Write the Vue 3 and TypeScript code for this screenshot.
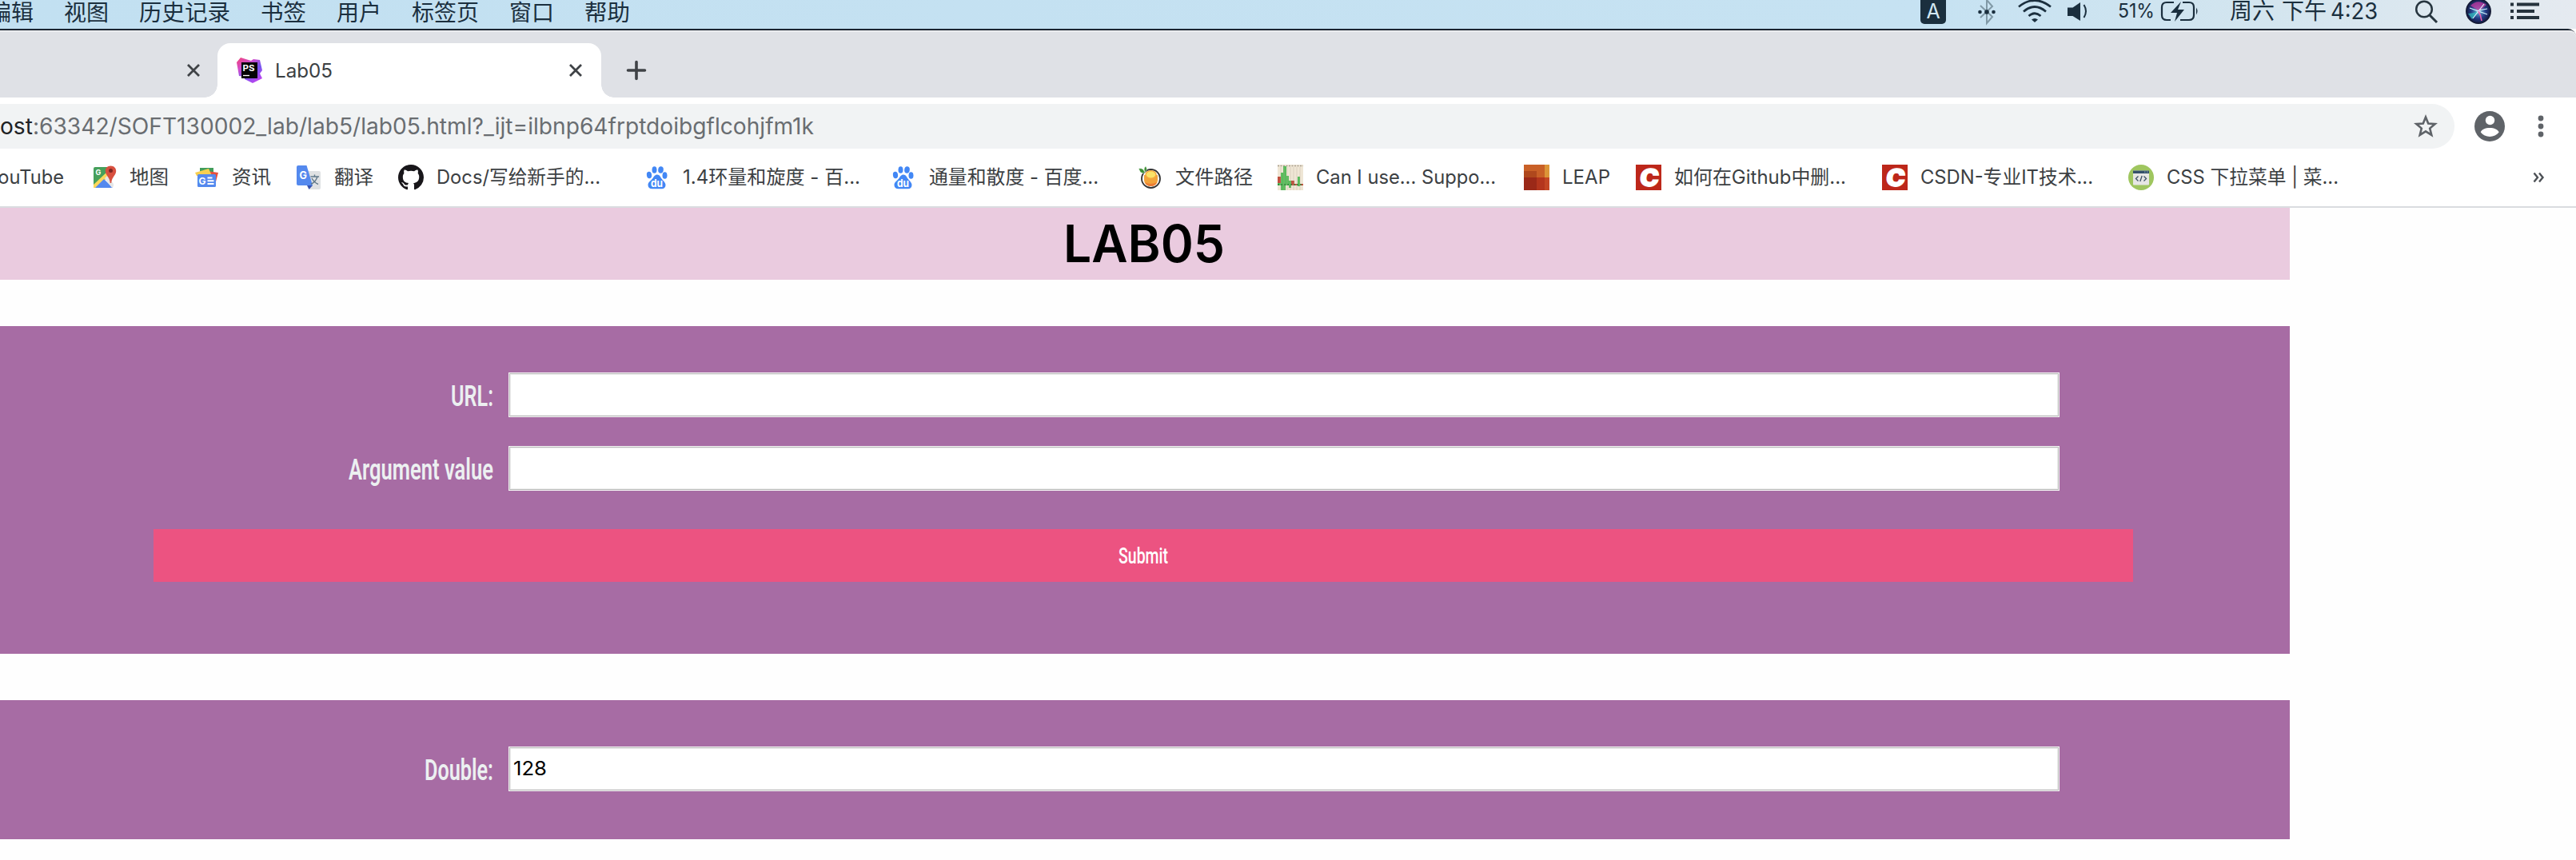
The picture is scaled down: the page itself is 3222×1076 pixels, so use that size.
<script setup lang="ts">
import type { Directive } from 'vue'

interface Bookmark { icon: string; label: string; gap: number; width: number }
interface MenuEntry { label: string; width: number }

// Condenses or expands a label horizontally so it occupies the given width.
const vFit: Directive<HTMLElement, number> = {
  mounted(el, binding) {
    const natural = el.offsetWidth
    const range = document.createRange()
    range.selectNodeContents(el)
    const exact = range.getBoundingClientRect().width || natural
    el.style.transform = `scaleX(${binding.value / exact})`
    el.style.marginRight = `${binding.value - exact}px`
  },
}

const menu: MenuEntry[] = [
  { label: '编辑', width: 56 },
  { label: '视图', width: 56 },
  { label: '历史记录', width: 114 },
  { label: '书签', width: 57 },
  { label: '用户', width: 56 },
  { label: '标签页', width: 84 },
  { label: '窗口', width: 56 },
  { label: '帮助', width: 57 },
]

const bookmarks: Bookmark[] = [
  { icon: 'maps', label: '地图', gap: 34, width: 49 },
  { icon: 'news', label: '资讯', gap: 31, width: 49 },
  { icon: 'translate', label: '翻译', gap: 31, width: 49 },
  { icon: 'github', label: 'Docs/写给新手的...', gap: 31, width: 205 },
  { icon: 'baidu', label: '1.4环量和旋度 - 百...', gap: 55, width: 222 },
  { icon: 'baidu', label: '通量和散度 - 百度...', gap: 38, width: 212 },
  { icon: 'juice', label: '文件路径', gap: 48, width: 97 },
  { icon: 'caniuse', label: 'Can I use... Suppo...', gap: 31, width: 225 },
  { icon: 'leap', label: 'LEAP', gap: 35, width: 60 },
  { icon: 'csdn', label: '如何在Github中删...', gap: 32, width: 215 },
  { icon: 'csdn', label: 'CSDN-专业IT技术...', gap: 45, width: 216 },
  { icon: 'runoob', label: 'CSS 下拉菜单 | 菜...', gap: 44, width: 215 },
]

const icons: Record<string, string> = {
  maps: `<rect x="3" y="3" width="24" height="26" rx="2" fill="#fff"/><path d="M5 3h17v10L3 28V5q0-2 2-2z" fill="#46a05b"/><path d="M3 25 20 9l4 5L6 29H3z" fill="#fbd75b"/><path d="M5 29 16 18 27 29z" fill="#5489ee"/><path d="M17 17l3-3 8 10v3l-2 2z" fill="#e6e6e6"/><path d="M24.500 1.500c-4 0-6.700 2.900-6.700 6.500 0 5.300 5.300 7 6 15h1.400c.7-8 6-9.700 6-15 0-3.600-2.700-6.500-6.700-6.500z" fill="#d8503f"/><circle cx="24.500" cy="7.500" r="2.500" fill="#7d2622"/><text x="5.500" y="13" font-size="9" font-weight="700" fill="#fff">G</text>`,
  news: `<path d="M8 4h17v10H8z" fill="#419d5a"/><path d="M17 8l14 2-4 15H13z" fill="#e5503e"/><path d="M2 10l17-5 4 9H4z" fill="#f7cf50"/><rect x="5" y="12" width="23" height="16" rx="1.500" fill="#5489ee"/><text x="6.500" y="24.500" font-size="12" font-weight="700" fill="#fff">G</text><path d="M17.500 16.500h6M17.500 20.200h8M17.500 24h8" stroke="#fff" stroke-width="1.900"/>`,
  translate: `<path d="M13 8h16q2 0 2 2v19q0 2-2 2H17z" fill="#dfe1e3"/><path d="M14 26h7l-4.500 5z" fill="#3652b0"/><path d="M3 1h10.500L21 26H3q-2 0-2-2V3q0-2 2-2z" fill="#5489ee"/><text x="4.500" y="17.500" font-size="12.500" font-weight="700" fill="#fff">G</text><path d="M18.500 15h10.500M23.500 12.500v2.500M27 15q-2 6.500-8 9.500M20 17q3 5.500 8 7.500" fill="none" stroke="#60788a" stroke-width="1.400"/>`,
  github: `<path transform="scale(2)" fill="#18161a" fill-rule="evenodd" d="M8 0C3.580 0 0 3.580 0 8c0 3.540 2.290 6.530 5.470 7.590.4.070.55-.17.55-.38 0-.19-.01-.82-.01-1.490-2.010.37-2.530-.49-2.690-.94-.09-.23-.48-.94-.82-1.130-.28-.15-.68-.52-.01-.53.63-.01 1.080.58 1.230.82.72 1.210 1.870.87 2.330.66.070-.52.28-.87.510-1.070-1.780-.2-3.640-.89-3.640-3.950 0-.87.31-1.590.82-2.150-.08-.2-.36-1.020.08-2.120 0 0 .67-.21 2.200.82.64-.18 1.320-.27 2-.27s1.360.09 2 .27c1.530-1.040 2.200-.82 2.200-.82.44 1.100.16 1.920.08 2.120.51.56.82 1.270.82 2.150 0 3.070-1.870 3.750-3.650 3.950.29.25.54.73.54 1.480 0 1.070-.01 1.930-.01 2.200 0 .21.15.46.55.38A8.010 8.010 0 0 0 16 8c0-4.420-3.580-8-8-8z"/>`,
  baidu: `<g fill="#4287f5"><ellipse cx="12.500" cy="6.500" rx="3" ry="4.300"/><ellipse cx="20.500" cy="6.500" rx="3.300" ry="4.200" transform="rotate(8 20.500 6.500)"/><ellipse cx="6" cy="13" rx="3.100" ry="4.200" transform="rotate(-8 6 13)"/><ellipse cx="25.500" cy="13.500" rx="3" ry="4.300"/><path d="M16 12.500c3 0 4.200 3 5.500 5 1.800 2.700 5 4.500 5 8 0 3-2 4.700-4.700 4.700H9.700C6.500 30.200 4.500 28.500 4.500 25.500c0-4 4-5.500 6-8.500 1.300-2 2.500-4.500 5.500-4.500z"/></g><text x="8" y="27.500" font-size="13" font-weight="700" fill="#fff" textLength="15" lengthAdjust="spacingAndGlyphs">du</text>`,
  juice: `<circle cx="17.500" cy="17.500" r="11.500" fill="#fff" stroke="#333" stroke-width="1.800"/><path d="M9 13h17v7q-1 7-8.500 7T9 20z" fill="#f2a43b"/><path d="M10 22q7 4 15 0-2 5-7.500 5T10 22z" fill="#ec7d35"/><ellipse cx="17.500" cy="12.500" rx="6.500" ry="4.700" fill="#fbe267" stroke="#f4a93d" stroke-width="1.500"/><path d="M10 11C3 11 4 7 2 5c5-1 7 1 8 6zM10 9c-2-4 0-6 1-7 2 3 2 5-1 7z" fill="#3c8f35" stroke="#fff" stroke-width=".5"/>`,
  caniuse: `<rect width="32" height="32" fill="#efe6d5"/><path d="M0 1.500h32" stroke="#aaa193" stroke-width="1.500" stroke-dasharray="2 1.500"/><path d="M0 15h4v9H0zM16 20h5v6h-5zM20 24h12v2H20z" fill="#c0513f"/><path d="M4 10h3V2h4v12h3v6h3v9h-3v-3h-4v6H4v-6H0v-3h4zM25 15h3v12h-3z" fill="#58bd5c"/><path d="M0 25h32" stroke="#287f35" stroke-width="1.500" stroke-dasharray="2 2"/><path d="M4 3v29M8 3v29M12 3v29M16 3v29M20 3v29M24 3v29M28 3v29" stroke="#b9a998" stroke-opacity=".35"/>`,
  leap: `<rect width="32" height="32" fill="#c96027"/><path d="M26 0h6v16h-6z" fill="#dc9538"/><path d="M0 8h16v8H0z" fill="#af481d"/><path d="M0 16h16v16H0z" fill="#9b2918"/><path d="M16 16h10v16H16z" fill="#b4351d"/><path d="M26 16h6v16h-6z" fill="#c34624"/>`,
  csdn: `<rect width="32" height="32" fill="#bd271a"/><text x="3.500" y="27" font-size="30" font-weight="900" fill="#fff" stroke="#fff" stroke-width="1.200" textLength="24" lengthAdjust="spacingAndGlyphs" transform="translate(3 0) skewX(-5)">C</text>`,
  runoob: `<circle cx="16" cy="16" r="16" fill="#9fc65f"/><rect x="6" y="7.500" width="20" height="18" rx="1" fill="#e6e6e4"/><path d="M6 7.500h20V11H6z" fill="#34506a"/><path d="M20 9.200h1.500M23 9.200h1.500" stroke="#7d9ab0" stroke-width="1.300"/><path d="M12.500 14.500 9.500 17.500l3 3M19.500 14.500l3 3-3 3M17.200 14l-2.400 7" fill="none" stroke="#3c5066" stroke-width="1.300"/>`,
  storm: `<defs><linearGradient id="ps" x1="0" y1="0" x2=".7" y2="1"><stop offset="0" stop-color="#f04475"/><stop offset=".35" stop-color="#d44bcb"/><stop offset=".65" stop-color="#7357f0"/><stop offset="1" stop-color="#bb45ef"/></linearGradient></defs><path d="M5 0 18 4l3-2 8 1 3 13-3 4 3 6-12 6-10-5v-3l-7-1L0 6z" fill="url(#ps)"/><rect x="6" y="6" width="20" height="20" fill="#050505"/><text x="7.500" y="16.500" font-size="10.500" font-weight="700" fill="#fff" textLength="15" lengthAdjust="spacingAndGlyphs">PS</text><path d="M8 22.500h8" stroke="#fff" stroke-width="1.300"/>`,
}
</script>

<template>
  <div class="screen">
    <div class="menubar">
      <nav class="menu">
        <span v-for="m in menu" :key="m.label" v-fit="m.width" class="menu-item">{{ m.label }}</span>
      </nav>
      <div class="status">
        <svg class="input-source" width="32" height="32" viewBox="0 0 32 32"><rect y="-4" width="32" height="34" rx="5" fill="#1b2f3e" /><text x="16" y="23" text-anchor="middle" font-size="25" fill="#d3e7f2">A</text></svg>
        <svg class="bluetooth" width="22" height="32" viewBox="0 0 22 32"><path d="M3 7l15 14-7 8V0l7 8L3 22" fill="none" stroke="#8199a6" stroke-width="2" /><g fill="#1b2f3e"><circle cx="2.500" cy="15" r="2.300" /><circle cx="11" cy="15" r="2.800" /><circle cx="19.500" cy="15" r="2.300" /></g></svg>
        <svg class="wifi" width="42" height="30" viewBox="0 0 42 30"><g fill="none" stroke="#1b2f3e" stroke-width="2.700"><path d="M1 8.500Q21-7.500 41 8.500" /><path d="M7 14.500Q21 2.500 35 14.500" /><path d="M13.500 20Q21 13.500 28.500 20" /></g><path d="M17 24.500q4-3 8 0L21 28z" fill="#1b2f3e" /></svg>
        <svg class="volume" width="26" height="28" viewBox="0 0 26 28"><path d="M0 9.500h6.500L16 3v23L6.500 20H0z" fill="#1b2f3e" /><path d="M20.500 6q5 8 0 16" fill="none" stroke="#1b2f3e" stroke-width="2" /></svg>
        <span v-fit="46" class="percent">51%</span>
        <svg class="battery" width="47" height="28" viewBox="0 0 47 28"><path d="M16 3H7Q1 3 1 9v10q0 6 6 6h5M27 3h8q6 0 6 6v10q0 6-6 6H24" fill="none" stroke="#1b2f3e" stroke-width="2.200" /><path d="M44 9.500q3 4.500 0 9z" fill="#1b2f3e" /><path d="M25 2 12 16h8l-3 11 12-15h-8z" fill="#1b2f3e" /></svg>
        <span class="clock"><span v-fit="56">周六</span><span v-fit="56">下午</span><span v-fit="59">4:23</span></span>
        <svg class="search" width="30" height="30" viewBox="0 0 30 30"><circle cx="12" cy="11.500" r="9.800" fill="none" stroke="#27353f" stroke-width="2.500" /><path d="M18.500 18.500 28 28" stroke="#27353f" stroke-width="3" /></svg>
        <svg class="siri" width="32" height="32" viewBox="0 0 32 32"><defs><radialGradient id="sg" cx=".5" cy=".5" r=".5"><stop offset="0" stop-color="#d8f8ff" /><stop offset=".25" stop-color="#4c88b8" /><stop offset=".6" stop-color="#253b85" /><stop offset="1" stop-color="#131a40" /></radialGradient></defs><circle cx="16" cy="14" r="15.200" fill="url(#sg)" stroke="#141a34" stroke-width="1.500" /><path d="M6 7Q15-2 26 6L17 14z" fill="#c5389f" fill-opacity=".75" /><path d="M3 17q7 0 13-3l-8 10z" fill="#35c8c5" fill-opacity=".7" /><path d="M5 10 27 18M23 5 9 23M16 13 27 11" stroke="#d9f8ff" stroke-width="1.200" /><path d="M16 14q3 5 4 12" stroke="#ef61b0" stroke-width="1.600" fill="none" /></svg>
        <svg class="list" width="36" height="26" viewBox="0 0 36 26"><path d="M0 4h4M8 4h28M0 12.500h4M8 12.500h22M0 20.500h4M8 20.500h28" transform="translate(0 1.500)" stroke="#26333d" stroke-width="3.800" /></svg>
      </div>
    </div>

    <div class="browser">
      <div class="tabstrip">
        <svg class="close" width="16" height="16" viewBox="0 0 16 16"><path d="M1 1l14 14M15 1 1 15" stroke="#3f4246" stroke-width="2.800" /></svg>
        <div class="tab">
          <svg class="favicon" width="32" height="32" viewBox="0 0 32 32" v-html="icons.storm" />
          <span v-fit="72" class="tab-title">Lab05</span>
          <svg class="tab-close" width="16" height="16" viewBox="0 0 16 16"><path d="M1 1l14 14M15 1 1 15" stroke="#3f4246" stroke-width="2.800" /></svg>
        </div>
        <svg class="plus" width="24" height="24" viewBox="0 0 24 24"><path d="M12 1.500v21M1.500 12h21" stroke="#3f4246" stroke-width="3.600" stroke-linecap="round" /></svg>
      </div>

      <div class="toolbar">
        <div class="omnibox">
          <span v-fit="1018" class="url"><b>ost</b>:63342/SOFT130002_lab/lab5/lab05.html?_ijt=ilbnp64frptdoibgflcohjfm1k</span>
          <svg class="star" width="30" height="30" viewBox="0 0 30 30"><path d="M15 3.500l3.200 8 8.500.6-6.500 5.500 2.100 8.300L15 21.400l-7.300 4.500 2.100-8.300-6.500-5.500 8.500-.6z" fill="none" stroke="#5f6368" stroke-width="2.600" /></svg>
        </div>
        <svg class="profile" width="38" height="38" viewBox="0 0 38 38"><circle cx="19" cy="19" r="19" fill="#5f6368" /><circle cx="19.500" cy="11.500" r="5.700" fill="#fff" /><path d="M7.800 26.500c1.500-7.500 21-7.500 22.800 0-5 7.200-17.800 7.200-22.800 0z" fill="#fff" /></svg>
        <svg class="dots" width="8" height="28" viewBox="0 0 8 28"><g fill="#5f6368"><circle cx="4" cy="4" r="3.400" /><circle cx="4" cy="14" r="3.400" /><circle cx="4" cy="24" r="3.400" /></g></svg>
      </div>

      <div class="bookmarks">
        <span v-fit="97" class="bm-label first">YouTube</span>
        <div v-for="(b, i) in bookmarks" :key="i" class="bookmark" :style="{ marginLeft: b.gap + 'px' }">
          <svg width="32" height="32" viewBox="0 0 32 32" v-html="icons[b.icon]" />
          <span v-fit="b.width" class="bm-label">{{ b.label }}</span>
        </div>
        <svg class="more" width="15" height="20" viewBox="0 0 15 20"><path d="M1.500 4.500 6 10l-4.500 5.500M8 4.500l4.500 5.500L8 15.500" fill="none" stroke="#4d5156" stroke-width="2.400" /></svg>
      </div>
    </div>

    <main class="page">
      <h1><span v-fit="202">LAB05</span></h1>
      <section class="panel form">
        <div class="row">
          <label><span v-fit="53">URL:</span></label>
          <div class="field"></div>
        </div>
        <div class="row">
          <label><span v-fit="181">Argument value</span></label>
          <div class="field"></div>
        </div>
        <button type="button"><span v-fit="62">Submit</span></button>
      </section>
      <section class="panel result">
        <div class="row">
          <label><span v-fit="86">Double:</span></label>
          <div class="field"><span v-fit="42">128</span></div>
        </div>
      </section>
    </main>
  </div>
</template>

<style>
body { margin: 0; background: #fff; overflow: hidden; }
</style>

<style scoped>
.screen {
  width: 3222px;
  height: 1076px;
  overflow: hidden;
  background: #fefefe;
  font-family: Inter, "Noto Sans CJK SC", sans-serif;
}
.screen span { display: inline-block; white-space: nowrap; transform-origin: 0 50%; flex: none; }
svg { display: block; flex: none; overflow: visible; font-family: Inter, sans-serif; }

.menubar {
  height: 36px;
  display: flex;
  justify-content: space-between;
  background: linear-gradient(90deg, #c2e0f1 0%, #c6e2f2 75%, #d3e5ef 88%, #e5eaf0 100%);
  color: #1b2f3e;
}
.menu { display: flex; gap: 38px; margin-left: -14px; }
.menu-item { font-size: 28px; line-height: 28px; height: 28px; font-family: "Noto Sans CJK SC", sans-serif; }
.status { display: flex; align-items: flex-start; width: 820px; }
.bluetooth { margin-left: 40px; }
.wifi { margin-left: 28px; }
.volume { margin-left: 20px; }
.percent { margin-left: 37px; font-size: 24px; line-height: 28px; }
.battery { margin-left: 8px; }
.clock { margin-left: 39px; font-size: 28px; line-height: 28px; width: 186px; }
.screen .clock { display: flex; }
.clock span:nth-child(2) { margin-left: 9px; }
.clock span:nth-child(3) { margin-left: 5px; }
.search { margin-left: 45px; }
.siri { margin-left: 34px; }
.list { margin-left: 24px; }

.browser {
  border-top: 2px solid #1b2431;
  background: #fff;
  height: 220px;
  border-bottom: 2px solid #dadce0;
  border-top-right-radius: 10px;
}
.tabstrip {
  height: 84px;
  background: #dfe1e6;
  display: flex;
  align-items: flex-end;
  border-top-right-radius: 8px;
  box-shadow: inset 0 2px #eaebee;
}
.close { margin: 0 0 26px 234px; }
.tab {
  position: relative;
  margin-left: 22px;
  width: 480px;
  height: 68px;
  background: #fff;
  border-radius: 16px 16px 0 0;
  display: flex;
  align-items: center;
}
.tab::before, .tab::after {
  content: "";
  position: absolute;
  bottom: 0;
  width: 16px;
  height: 16px;
}
.tab::before { left: -16px; background: radial-gradient(circle at 0 0, transparent 15.500px, #fff 16px); }
.tab::after { right: -16px; background: radial-gradient(circle at 100% 0, transparent 15.500px, #fff 16px); }
.favicon { margin-left: 24px; }
.tab-title { margin-left: 16px; font-size: 24px; color: #3c4043; }
.tab-close { margin-left: auto; margin-right: 24px; }
.plus { margin: 0 0 22px 32px; }

.toolbar { height: 72px; display: flex; align-items: center; }
.omnibox {
  width: 3070px;
  height: 56px;
  background: #f1f3f4;
  border-radius: 0 28px 28px 0;
  display: flex;
  align-items: center;
  justify-content: space-between;
}
.url { font-size: 28px; color: #696d71; }
.url b { font-weight: 400; color: #202124; }
.star { margin-right: 21px; }
.profile { margin-left: 25px; }
.dots { margin-left: 41px; }

.bookmarks { height: 56px; display: flex; align-items: center; color: #3c4043; font-size: 24px; }
.first { margin-left: -17px; }
.bookmark { display: flex; align-items: center; gap: 16px; }
.bm-label { line-height: 32px; }
.more { margin-left: auto; margin-right: 39px; }

.page { width: 2864px; }
h1 {
  margin: 0;
  height: 90px;
  background: #eacbdf;
  color: #000;
  font-size: 64px;
  line-height: 90px;
  font-weight: 600;
  text-align: center;
  box-sizing: border-box;
  padding-right: 3px;
}
.panel { background: #a76ca4; box-sizing: border-box; display: flex; flex-direction: column; }
.form { margin-top: 58px; height: 410px; padding-top: 58px; }
.result { margin-top: 58px; height: 174px; padding-top: 58px; }
.row { display: flex; height: 56px; margin-bottom: 36px; align-items: center; }
label {
  width: 617px;
  height: 56px;
  text-align: right;
  color: #ecf0f1;
  font-family: Roboto, "Liberation Sans", sans-serif;
  font-weight: 600;
  font-size: 37px;
  line-height: 59px;
}
.field {
  margin-left: 19px;
  width: 1940px;
  height: 56px;
  box-sizing: border-box;
  background: #fff;
  border: 1px solid #f4f4f4;
  box-shadow: inset 0 0 0 1px #bbb, inset 0 0 0 2px #eee;
  padding-left: 5px;
  color: #000;
  font-size: 24px;
  line-height: 54px;
}
button {
  margin: 12px 0 0 192px;
  width: 2476px;
  height: 66px;
  padding: 0;
  border: 0;
  background: #ec5381;
  color: #fff;
  font-family: Roboto, "Liberation Sans", sans-serif;
  font-weight: 500;
  font-size: 28px;
}
</style>
